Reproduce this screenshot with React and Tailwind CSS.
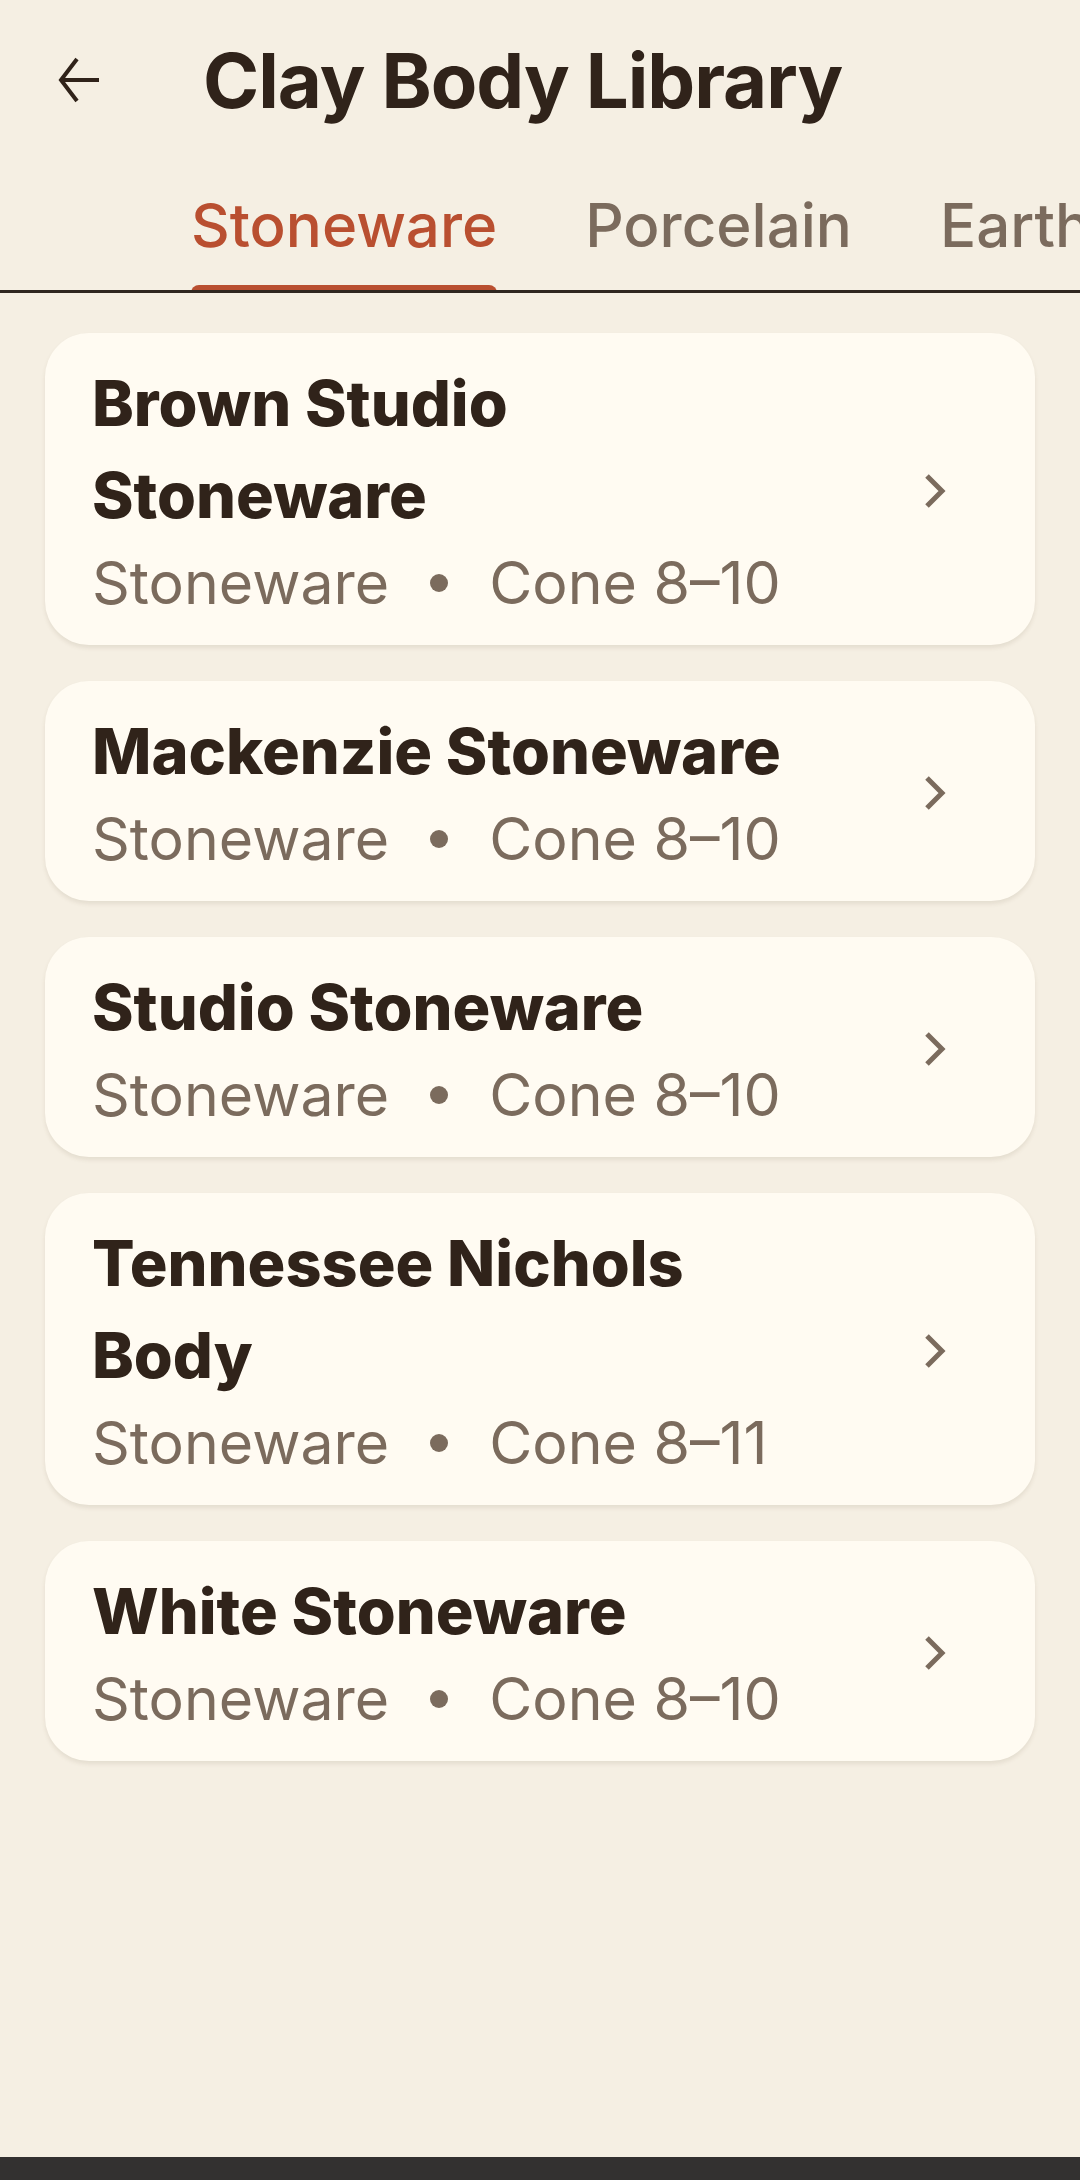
const tabs = ['Stoneware', 'Porcelain', 'Earthenware'];

const clays = [
  { name: 'Brown Studio Stoneware', type: 'Stoneware', cone: 'Cone 8–10' },
  { name: 'Mackenzie Stoneware', type: 'Stoneware', cone: 'Cone 8–10' },
  { name: 'Studio Stoneware', type: 'Stoneware', cone: 'Cone 8–10' },
  { name: 'Tennessee Nichols Body', type: 'Stoneware', cone: 'Cone 8–11' },
  { name: 'White Stoneware', type: 'Stoneware', cone: 'Cone 8–10' },
];

function BackArrow() {
  return (
    <svg width="48" height="48" viewBox="0 0 48 48" fill="none" stroke="#30231a" strokeWidth="4">
      <path d="M44 24H6" />
      <path d="M22 3L6 24l16 21" strokeLinejoin="miter" />
    </svg>
  );
}

function Chevron() {
  return (
    <svg width="22" height="36" viewBox="0 0 22 36" fill="none" stroke="#7b6b5d" strokeWidth="5">
      <path d="M3 3l15 15L3 33" />
    </svg>
  );
}

function ClayCard({ clay }) {
  return (
    <div className="flex items-center rounded-[44px] bg-[#fffbf2] pl-[47px] pr-[89px] pt-[24px] pb-[20px] shadow-[0_3px_4px_rgba(90,70,40,0.10)]">
      <div className="flex-1 pr-[102px]">
        <div className="text-[63px] font-extrabold leading-[92px] text-[#30231a]">{clay.name}</div>
        <div className="flex items-center text-[59px] leading-[84px] text-[#7b6b5d]">
          <span>{clay.type}</span>
          <span className="mx-[41px] h-[18px] w-[18px] rounded-full bg-[#7b6b5d]" />
          <span>{clay.cone}</span>
        </div>
      </div>
      <Chevron />
    </div>
  );
}

export default function App() {
  return (
    <div className="flex min-h-[2180px] flex-col bg-[#f5efe3] font-['Inter',sans-serif]">
      <header className="flex h-[160px] items-center">
        <div className="ml-[55px] flex h-[48px] w-[48px] items-center justify-center">
          <BackArrow />
        </div>
        <h1 className="ml-[100px] text-[76px] font-bold tracking-[-1px] text-[#30231a]">Clay Body Library</h1>
      </header>

      <nav className="relative overflow-hidden whitespace-nowrap border-b-[3px] border-[#2f2720]">
        <div className="flex gap-[88px] pl-[191px]">
          {tabs.map((tab, i) => (
            <div key={tab} className="relative flex h-[130px] items-center">
              <span className={'text-[60px] font-medium ' + (i === 0 ? 'text-[#b94f30]' : 'text-[#7b6b5d]')}>{tab}</span>
              {i === 0 && (
                <span className="absolute bottom-[-3px] left-0 right-0 h-[8px] rounded-t-[8px] bg-[#b94f30]" />
              )}
            </div>
          ))}
        </div>
      </nav>

      <main className="flex flex-1 flex-col gap-[36px] px-[45px] pt-[40px]">
        {clays.map((clay) => (
          <ClayCard key={clay.name} clay={clay} />
        ))}
      </main>

      <div className="h-[23px] bg-[#333130]" />
    </div>
  );
}
